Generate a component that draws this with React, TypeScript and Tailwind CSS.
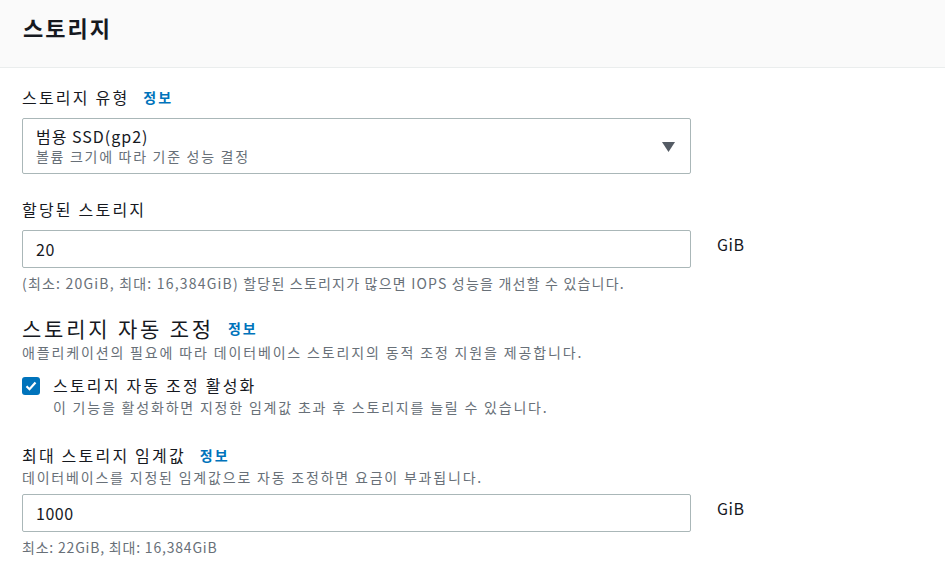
import React from 'react';

const font = { fontFamily: '"Noto Sans CJK KR", "Noto Sans", sans-serif' };

function Info() {
  return <a className="ml-[14px] text-[14px] font-bold tracking-[2px] text-[#0073bb]">정보</a>;
}

function NumberField({ value }: { value: string }) {
  return (
    <div className="flex items-start">
      <div className="w-[669px] h-[38px] border border-[#aab7b8] rounded-[2px] flex items-center px-[13px] text-[16px] tracking-[0.5px] text-[#16191f]">
        {value}
      </div>
      <span className="ml-[26px] mt-[2px] text-[16px] tracking-[0.5px] text-[#16191f]">GiB</span>
    </div>
  );
}

export default function App() {
  return (
    <div className="w-[945px] h-[580px] bg-white text-[#16191f] overflow-hidden" style={font}>
      <div className="h-[68px] bg-[#fafafa] border-b border-[#eaeded] flex items-center px-[23px]">
        <h2 className="text-[22px] font-bold tracking-[2px] -mt-[12px]">스토리지</h2>
      </div>

      <div className="px-[22px]">
        <div className="mt-[18px] flex items-center text-[16px] leading-[22px] tracking-[2.2px]">
          스토리지 유형 <Info />
        </div>
        <div className="mt-[10px] w-[669px] h-[56px] border border-[#aab7b8] rounded-[2px] flex items-center justify-between pl-[13px] pr-[15px]">
          <div className="flex flex-col">
            <span className="text-[16px] leading-[20px] tracking-[1px]">범용 SSD(gp2)</span>
            <span className="text-[14px] leading-[20px] tracking-[1.7px] text-[#687078]">
              볼륨 크기에 따라 기준 성능 결정
            </span>
          </div>
          <svg width="13" height="10" viewBox="0 0 13 10" className="mt-[2px]">
            <path d="M0 0h13L6.5 10z" fill="#545b64" />
          </svg>
        </div>

        <div className="mt-[24px] text-[16px] leading-[22px] tracking-[2.2px]">할당된 스토리지</div>
        <div className="mt-[10px]">
          <NumberField value="20" />
        </div>
        <div className="mt-[4px] text-[14px] leading-[22px] tracking-[1.2px] text-[#687078]">
          (최소: 20GiB, 최대: 16,384GiB) 할당된 스토리지가 많으면 IOPS 성능을 개선할 수 있습니다.
        </div>

        <div className="mt-[20px] flex items-center text-[21px] leading-[28px] tracking-[2.8px]">
          스토리지 자동 조정 <Info />
        </div>
        <div className="text-[14px] leading-[20px] tracking-[1.85px] text-[#687078]">
          애플리케이션의 필요에 따라 데이터베이스 스토리지의 동적 조정 지원을 제공합니다.
        </div>

        <div className="mt-[12px] flex items-start">
          <div className="w-[18px] h-[18px] rounded-[3px] bg-[#0073bb] flex items-center justify-center mt-[3px]">
            <svg width="12" height="10" viewBox="0 0 12 10">
              <path d="M1.5 5.2l3 3L10.5 1.5" stroke="#fff" strokeWidth="2.2" fill="none" />
            </svg>
          </div>
          <div className="ml-[13px] flex flex-col">
            <span className="text-[16px] leading-[22px] tracking-[2.2px]">스토리지 자동 조정 활성화</span>
            <span className="text-[14px] leading-[22px] tracking-[1.8px] text-[#687078]">
              이 기능을 활성화하면 지정한 임계값 초과 후 스토리지를 늘릴 수 있습니다.
            </span>
          </div>
        </div>

        <div className="mt-[26px] flex items-center text-[16px] leading-[22px] tracking-[2.2px]">
          최대 스토리지 임계값 <Info />
        </div>
        <div className="text-[14px] leading-[22px] tracking-[1.8px] text-[#687078]">
          데이터베이스를 지정된 임계값으로 자동 조정하면 요금이 부과됩니다.
        </div>
        <div className="mt-[6px]">
          <NumberField value="1000" />
        </div>
        <div className="mt-[4px] text-[14px] leading-[22px] tracking-[0.8px] text-[#687078]">
          최소: 22GiB, 최대: 16,384GiB
        </div>
      </div>
    </div>
  );
}
